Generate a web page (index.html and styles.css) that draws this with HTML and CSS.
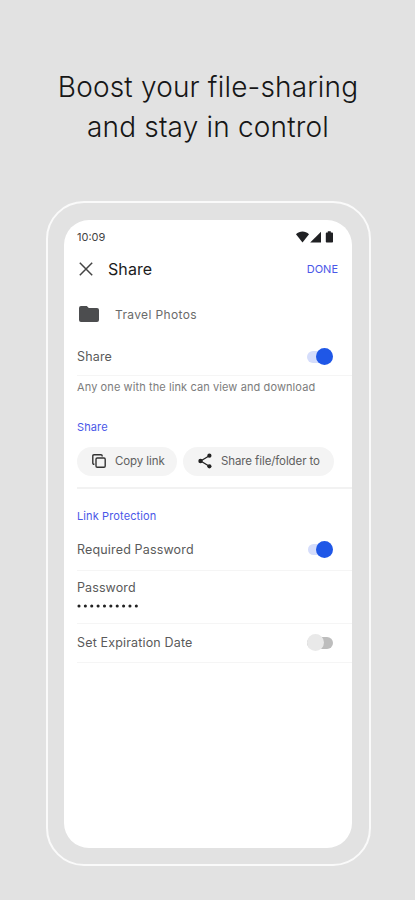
FILE: index.html
```html
<!DOCTYPE html>
<html lang="en">
<head>
<meta charset="utf-8">
<title>Share</title>
<link rel="stylesheet" href="styles.css">
</head>
<body>
<h1 class="headline"><span class="headline-a">Boost your file-sharing</span><br><span class="headline-b">and stay in control</span></h1>
<main class="phone">
  <div class="screen">
    <div class="status">
      <span class="time">10:09</span>
      <svg class="status-icons" width="38" height="12" viewBox="0 0 38 12" fill="#202124">
        <path d="M0 3.2C3.6-.3 9.4-.3 13 3.2L6.5 11.5Z"/>
        <path d="M25 0.7V11.5H14.2Z"/>
        <path d="M31.8.3h3v1.3h1.4q.8 0 .8.8v8.3q0 .8-.8.8h-5.6q-.8 0-.8-.8V2.4q0-.8.8-.8h1.2Z"/>
      </svg>
    </div>
    <header class="appbar">
      <svg class="close" width="14" height="14" viewBox="0 0 14 14" fill="none" stroke="#444" stroke-width="1.5"><path d="M.8.8 13.2 13.2M13.2.8.8 13.2"/></svg>
      <span class="title">Share</span>
      <span class="done">DONE</span>
    </header>
    <div class="folder">
      <svg width="20" height="16" viewBox="0 0 20 16" fill="#4c4d4f"><path d="M2 0h5.8l2 2H18q2 0 2 2v10q0 2-2 2H2q-2 0-2-2V2Q0 0 2 0Z"/></svg>
      <span class="folder-name">Travel Photos</span>
    </div>
    <div class="row row-share"><span class="t-share">Share</span><span class="switch on"></span></div>
    <p class="note">Any one with the link can view and download</p>
    <h2 class="section">Share</h2>
    <div class="actions">
      <span class="chip chip-copy">
        <svg width="14" height="14" viewBox="0 0 14 14" fill="none" stroke="#333" stroke-width="1.4" stroke-linejoin="round"><rect x="4" y="4" width="9.2" height="9.2" rx="1.2"/><path d="M2.4 10.2H2Q.8 10.2.8 9V2Q.8.8 2 .8h7q1.2 0 1.2 1.2v.4"/></svg>
        <span class="t-copy">Copy link</span>
      </span>
      <span class="chip chip-send">
        <svg width="14" height="16" viewBox="0 0 14 16" fill="#222"><path d="M11.3 2.7 2.7 8l8.6 5.3" fill="none" stroke="#222" stroke-width="1.3"/><circle cx="11.4" cy="2.7" r="2.1"/><circle cx="2.5" cy="8" r="2.2"/><circle cx="11.4" cy="13.3" r="2.1"/></svg>
        <span class="t-send">Share file/folder to</span>
      </span>
    </div>
    <h2 class="section section-link">Link Protection</h2>
    <div class="row row-required"><span class="t-required">Required Password</span><span class="switch on small"></span></div>
    <div class="password">
      <span class="t-password">Password</span>
      <svg class="dots" width="62" height="4" viewBox="0 0 62 4"><path d="M2 2H60" stroke="#222" stroke-width="3.1" stroke-linecap="round" stroke-dasharray="0 6.37"/></svg>
    </div>
    <div class="row row-expire"><span class="t-expire">Set Expiration Date</span><span class="switch off"></span></div>
  </div>
</main>
</body>
</html>
```

FILE: styles.css
```css
* { box-sizing: border-box; }
body {
  margin: 0;
  height: 900px;
  padding-top: 67px;
  background: #e2e2e2;
  font-family: Inter, sans-serif;
  color: #5a5a5a;
  overflow: hidden;
}
h1, h2, p { margin: 0; font-weight: 400; }
.headline {
  height: 134px;
  padding-left: 1px;
  font-size: 28px;
  line-height: 40px;
  font-weight: 300;
  letter-spacing: .18px;
  text-align: center;
  color: #161616;
  white-space: nowrap;
}
.phone {
  width: 325px;
  height: 665px;
  margin-left: 46px;
  padding: 17px 16px;
  border: 2px solid #fafafa;
  border-radius: 38px;
}
.screen {
  width: 288px;
  height: 628px;
  border-radius: 25px;
  background: #fff;
  padding-left: 13px;
  overflow: hidden;
  white-space: nowrap;
}
.status { display: flex; align-items: center; height: 34px; padding-right: 18px; }
.time { font-size: 11px; color: #444; }
.status-icons { margin-left: auto; }
.appbar { display: flex; align-items: center; height: 30px; padding: 0 14px 0 2px; }
.title { margin-left: 15px; font-size: 16px; letter-spacing: .1px; color: #1c1c1c; }
.done { margin-left: auto; font-size: 11px; color: #4a57e8; }
.folder { display: flex; align-items: center; height: 60px; padding-left: 2px; }
.folder-name { margin-left: 16px; font-size: 12px; letter-spacing: .36px; color: #6a6a6a; }
.row {
  display: flex;
  align-items: center;
  justify-content: space-between;
  padding-right: 19px;
  border-bottom: 1px solid #f5f5f5;
  font-size: 12.5px;
  letter-spacing: .16px;
}
.row-share { height: 36px; margin-top: -4px; padding-bottom: 2px; }
.note { height: 24px; line-height: 23px; font-size: 11px; letter-spacing: .1px; color: #7c7c7c; }
.section { height: 16px; margin-top: 19px; line-height: 16px; font-size: 11px; letter-spacing: .12px; color: #4a57e8; }
.actions { display: flex; gap: 6px; height: 54px; padding-top: 12px; border-bottom: 2px solid #f2f2f2; }
.chip { display: flex; align-items: center; height: 29px; padding-bottom: 1px; border-radius: 15px; background: #f4f4f4; font-size: 11.5px; letter-spacing: -.1px; color: #606060; }
.chip-copy { width: 100px; padding-left: 15px; gap: 9px; }
.chip-send { width: 151px; padding-left: 15px; gap: 9px; }
.section-link { margin-top: 19px; }
.row-required { height: 47px; padding-top: 4px; }
.password { display: flex; flex-direction: column; height: 53px; padding-top: 8px; border-bottom: 1px solid #f5f5f5; font-size: 12.5px; line-height: 18px; letter-spacing: .1px; }
.dots { margin-top: 7px; }
.row-expire { height: 39px; padding-bottom: 1px; }
.switch { display: flex; align-items: center; width: 26px; height: 12px; border-radius: 6px; background: #d5ddfb; }
.switch::after { content: ""; flex: none; width: 17px; height: 17px; border-radius: 50%; background: #1f57e7; }
.on { justify-content: flex-end; }
.small { width: 25px; height: 11px; }
.off { background: #bdbdbd; }
.off::after { background: #e9e9e9; }
```
